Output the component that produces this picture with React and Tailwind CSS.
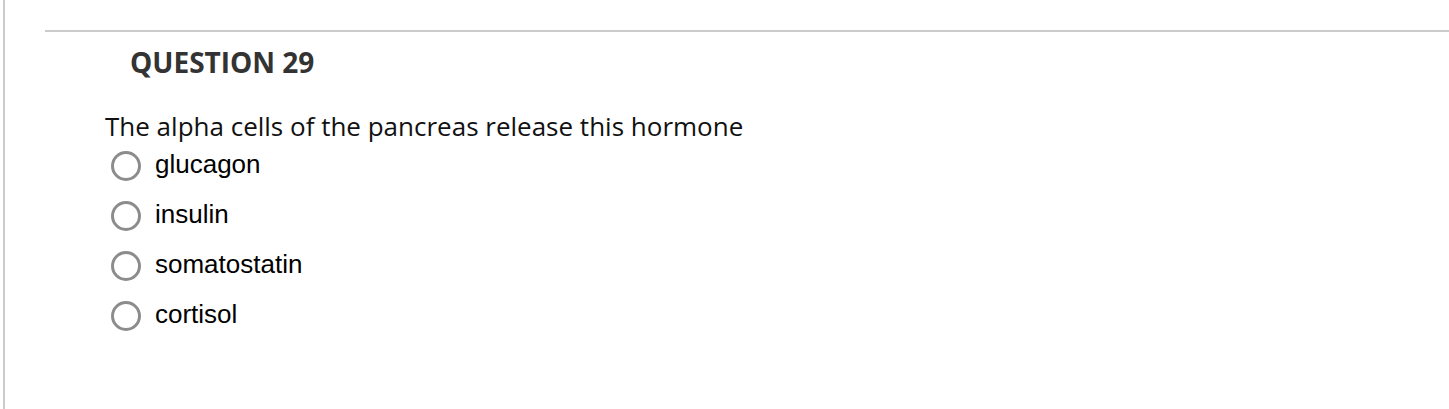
const OPTIONS = ['glucagon', 'insulin', 'somatostatin', 'cortisol'];

function Radio() {
  return (
    <span className="w-[30px] h-[30px] rounded-full border-[3px] border-[#8c8c8c] bg-white flex-shrink-0" />
  );
}

export default function App() {
  return (
    <div className="w-[1449px] h-[409px] bg-white pl-[3px] overflow-hidden">
      <div className="h-full border-l-2 border-[#cbcbcb] pl-[40px] pt-[30px]">
        <div className="border-t-2 border-[#cbcbcb]" />
        <div className="pl-[60px]">
          <h2 className="pl-[25px] pt-[12px] text-[28px] font-bold text-[#333333] leading-[36px] font-['Open_Sans',sans-serif]">
            QUESTION 29
          </h2>
          <p className="mt-[30px] text-[26px] leading-[32px] text-[#111111] font-['Open_Sans',sans-serif]">
            The alpha cells of the pancreas release this hormone
          </p>
          <ul className="flex flex-col gap-[20px] mt-[9px]">
            {OPTIONS.map(opt => (
              <li key={opt} className="flex items-center gap-[14px] pl-[6px] h-[30px]">
                <Radio />
                <span className="text-[26px] text-black font-['Liberation_Sans',Arial,sans-serif] leading-[30px] -mt-[5px]">
                  {opt}
                </span>
              </li>
            ))}
          </ul>
        </div>
      </div>
    </div>
  );
}
